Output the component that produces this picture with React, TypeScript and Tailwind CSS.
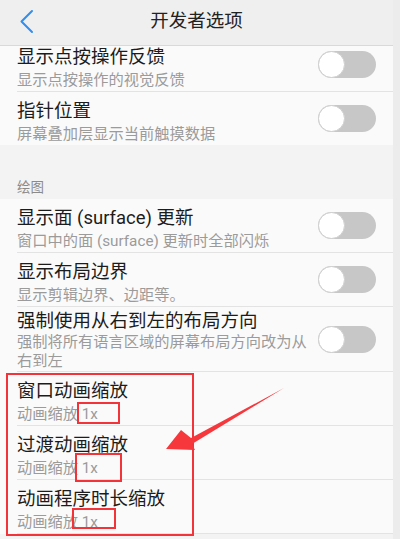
import React from "react";

const FONT = { fontFamily: "Roboto, 'Noto Sans CJK SC', 'Noto Sans', sans-serif" };

function Toggle() {
  return (
    <div className="relative w-[58px] h-[27px] rounded-full bg-[#c7c7c7] shrink-0">
      <div className="absolute left-0 top-0 w-[27px] h-[27px] rounded-full bg-white border border-[#cfcfcf]" />
    </div>
  );
}

function Row({
  title,
  sub,
  toggle = true,
  last = false,
  multi = false,
}: {
  title: string;
  sub: React.ReactNode;
  toggle?: boolean;
  last?: boolean;
  multi?: boolean;
}) {
  return (
    <div
      className={
        "ml-[17px] pr-[17px] flex items-center " +
        (last ? "" : "border-b border-[#e3e3e3]")
      }
    >
      <div className={"flex-1 min-w-0 " + (multi ? "pt-[3px]" : "pt-[7px]")}>
        <div className={"text-[18.5px] text-[#1c1c1c] " + (multi ? "leading-[23px]" : "leading-[24px]")}>
          {title}
        </div>
        <div
          className={
            "text-[15.25px] text-[#9b9b9b] pr-[6px] " +
            (multi ? "leading-[19px]" : "leading-[22px]")
          }
        >
          {sub}
        </div>
      </div>
      {toggle && <Toggle />}
    </div>
  );
}

export default function App() {
  return (
    <div className="relative w-[400px] h-[539px] overflow-hidden bg-[#ececec]" style={FONT}>
      <div className="w-[393px] h-full flex flex-col bg-[#f3f3f3]">
        {/* Header */}
        <div className="relative z-10 h-[46px] shrink-0 bg-[#efefef] border-b border-[#d9d9d9] flex items-center justify-center">
          <svg
            className="absolute left-[18px] top-[9px]"
            width="18"
            height="26"
            viewBox="0 0 18 26"
            fill="none"
          >
            <path d="M14 2 L3.5 12.5 L14 23" stroke="#2f8ef0" strokeWidth="2" strokeLinecap="round" strokeLinejoin="round" />
          </svg>
          <div className="text-[18.5px] text-[#222] leading-[24px] -mt-[3px]">开发者选项</div>
        </div>

        {/* Content */}
        <div className="flex-1 overflow-hidden">
          <div className="-mt-[8px]">
            <div className="bg-[#fafafa]">
              <Row title="显示点按操作反馈" sub="显示点按操作的视觉反馈" />
              <Row title="指针位置" sub="屏幕叠加层显示当前触摸数据" last />
            </div>

            <div className="h-[54px] flex items-end pb-[2px] pl-[17px]">
              <div className="text-[13.5px] leading-[20px] text-[#8a8a8a]">绘图</div>
            </div>

            <div className="bg-[#fafafa]">
              <Row title="显示面 (surface) 更新" sub="窗口中的面 (surface) 更新时全部闪烁" />
              <Row title="显示布局边界" sub="显示剪辑边界、边距等。" />
              <Row
                title="强制使用从右到左的布局方向"
                sub="强制将所有语言区域的屏幕布局方向改为从右到左"
                multi
              />
              <Row title="窗口动画缩放" sub="动画缩放 1x" toggle={false} />
              <Row title="过渡动画缩放" sub="动画缩放 1x" toggle={false} />
              <Row title="动画程序时长缩放" sub="动画缩放 1x" toggle={false} />
            </div>
          </div>
        </div>
      </div>

      {/* Annotations */}
      <div className="absolute left-[6px] top-[373px] w-[188px] h-[163px] border-[2.5px] border-[#f2333a]" />
      <div className="absolute left-[77px] top-[402px] w-[43px] h-[22px] border-[2.5px] border-[#f2333a]" />
      <div className="absolute left-[75px] top-[453px] w-[47px] h-[29px] border-[2.5px] border-[#f2333a]" />
      <div className="absolute left-[72px] top-[508px] w-[44px] h-[21px] border-[2.5px] border-[#f2333a]" />
      <svg className="absolute left-0 top-0" width="400" height="539" viewBox="0 0 400 539">
        <polygon
          points="284,388 191,438 181,430 166,449 195,450 192,444"
          fill="#f6373c"
        />
      </svg>
    </div>
  );
}
